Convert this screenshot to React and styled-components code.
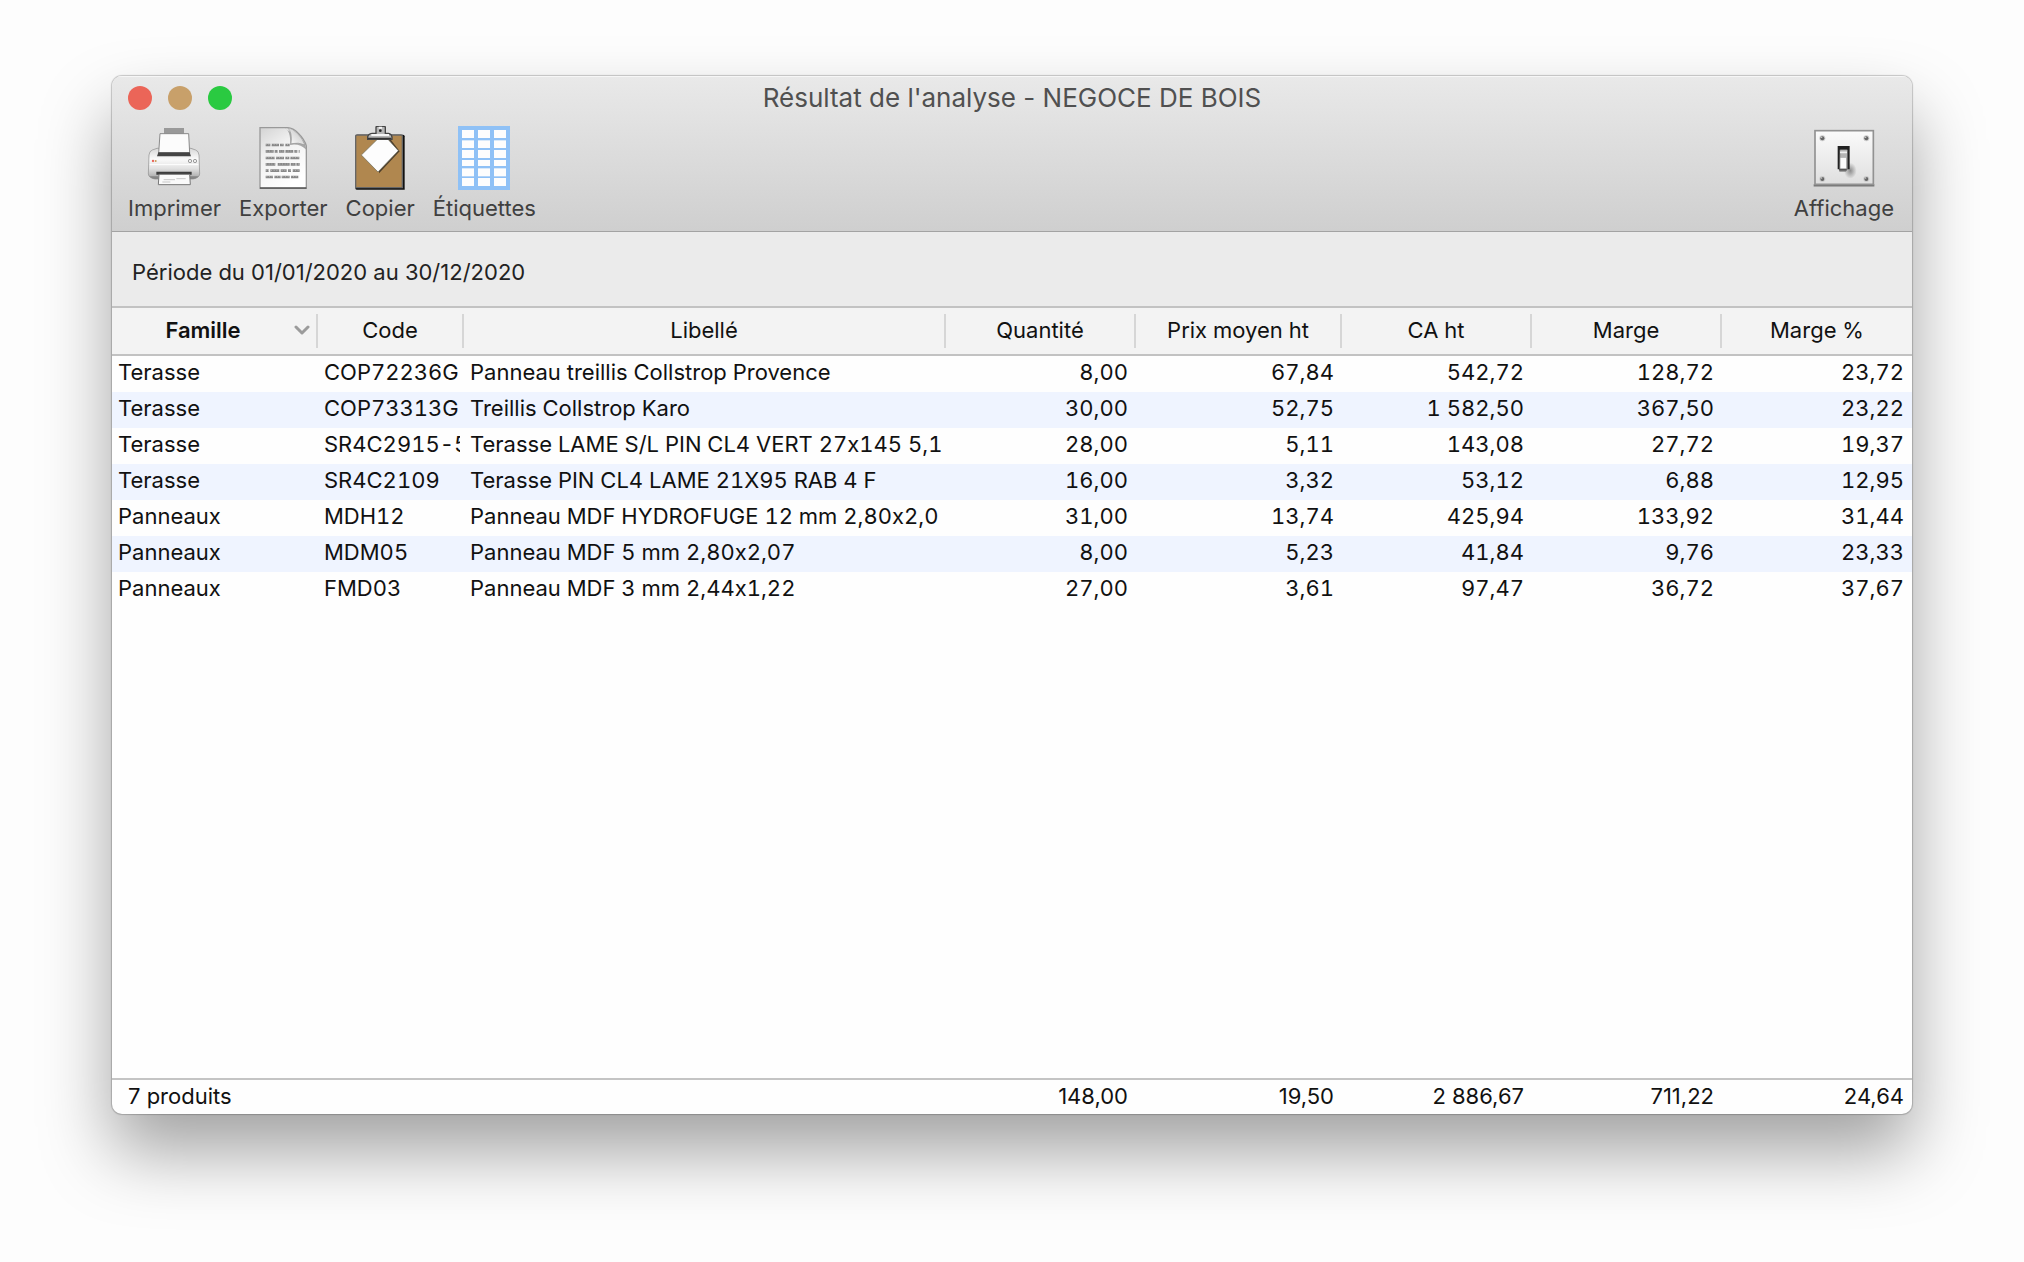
import React from 'react';
import styled, { createGlobalStyle } from 'styled-components';

const GlobalStyle = createGlobalStyle`
  * {
    box-sizing: border-box;
  }
  body {
    margin: 0;
    background: #fdfdfd;
    color: #111;
    font-family: Inter, "Liberation Sans", sans-serif;
    font-size: 22px;
    font-variant-ligatures: no-contextual;
  }
  button {
    border: 0;
    padding: 0;
    background: none;
    color: inherit;
    font: inherit;
    font-variant-ligatures: inherit;
  }
`;

const Desktop = styled.div`
  display: flex;
  min-height: 100vh;
  padding: 76px 112px 148px;
`;

const Window = styled.main`
  flex: 1;
  min-width: 0;
  display: flex;
  flex-direction: column;
  overflow: hidden;
  border-radius: 10px;
  background: #fefefe;
  box-shadow: 0 0 1px 1px rgba(0, 0, 0, 0.2), 0 38px 70px rgba(0, 0, 0, 0.36);
`;

const Header = styled.header`
  height: 156px;
  border-bottom: 1px solid #a3a3a3;
  background: linear-gradient(#e9e9e9, #cfcfcf);
  box-shadow: inset 0 1px 0 #f6f6f6;
`;

const TitleBar = styled.div`
  display: grid;
  grid-template-columns: 1fr auto 1fr;
  align-items: center;
  height: 44px;
  padding: 0 16px;
`;

const Lights = styled.div`
  display: flex;
  gap: 16px;
`;

const Light = styled.button`
  width: 24px;
  height: 24px;
  border-radius: 50%;
  background: ${(p) => p.$color};
`;

const Title = styled.h1`
  margin: 0;
  color: #505050;
  font-size: 26px;
  font-weight: 400;
  line-height: 34px;
`;

const Toolbar = styled.div`
  display: flex;
  gap: 18px;
  padding: 6px 18px 0 16px;
`;

const Spacer = styled.div`
  flex: 1;
`;

const ToolButton = styled.button`
  display: flex;
  flex-direction: column;
  align-items: center;
  gap: 4px;
  color: #404040;
  line-height: 28px;

  svg {
    display: block;
    height: 64px;
  }
`;

const Period = styled.p`
  margin: 0;
  padding: 4px 20px 0;
  border-bottom: 2px solid #c2c2c2;
  background: #ebebeb;
  color: #222;
  line-height: 72px;
  height: 76px;
`;

const Table = styled.table`
  flex: 1;
  display: flex;
  flex-direction: column;
  font-variant-numeric: tabular-nums;

  thead {
    display: block;
    border-bottom: 2px solid #c2c2c2;
    background: #f3f3f3;
  }
  tbody {
    flex: 1;
    display: block;
  }
  tfoot {
    display: block;
    border-top: 2px solid #c4c4c4;
    font-variant-numeric: normal;
  }
`;

const Row = styled.tr`
  display: grid;
  grid-template-columns: 206px 146px minmax(0, 1fr) 190px 206px 190px 190px 190px;

  tbody &:nth-child(even) {
    background: #eff4ff;
  }
`;

const FootRow = styled(Row)`
  grid-template-columns: minmax(0, 1fr) 190px 206px 190px 190px 190px;
`;

const HeadCell = styled.th`
  display: flex;
  padding: 6px 0;
  font-weight: ${(p) => (p.$sorted ? 600 : 400)};

  button {
    flex: 1;
    display: flex;
    align-items: center;
    height: 34px;
    padding: 0 ${(p) => (p.$sorted ? 6 : 0)}px 2px 0;
    border-right: 2px solid #d6d6d6;
  }
  &:last-child button {
    border-right: 0;
  }
  span {
    flex: 1;
    text-align: center;
  }
`;

const Cell = styled.td`
  padding: ${(p) => (p.$number ? '0 8px 4px' : '0 4px 4px 6px')};
  line-height: 32px;
  text-align: ${(p) => (p.$number ? 'right' : 'left')};

  div {
    overflow: hidden;
    white-space: nowrap;
  }
`;

const FootCell = styled.td`
  padding: 0 8px 2px ${(p) => (p.$number ? 8 : 16)}px;
  line-height: 32px;
  text-align: ${(p) => (p.$number ? 'right' : 'left')};
`;

const Chevron = () => (
  <svg width="16" height="10" viewBox="0 0 16 10" fill="none" stroke="#9b9b9b" strokeWidth="3" strokeLinecap="round" strokeLinejoin="round">
    <path d="M2 2l6 6 6-6" />
  </svg>
);

const PrinterIcon = () => (
  <svg width="54" height="64" viewBox="0 0 162 192">
    <defs>
      <linearGradient id="printer-body" x1="0" y1="0" x2="0" y2="1">
        <stop offset="0" stopColor="#d8d8d8" />
        <stop offset="0.35" stopColor="#fafafa" />
        <stop offset="0.65" stopColor="#e2e2e2" />
        <stop offset="1" stopColor="#a2a2a2" />
      </linearGradient>
    </defs>
    <path d="M51 6h60v18H51z" fill="#999" />
    <path d="M30 67l-14 5Q7 75 6 87L4 144q1 12 20 15h114q19-3 20-15l-2-57q-1-12-10-15l-14-5z" fill="url(#printer-body)" stroke="#8d8d8d" strokeWidth="2" />
    <path d="M39 23h86l3 58H35z" fill="#fcfcfc" stroke="#8a8a8a" strokeWidth="3" />
    <path d="M34 79h94l4 12H30z" fill="#454545" />
    <path d="M8 116h146" stroke="#fff" strokeWidth="3" />
    <circle cx="18" cy="105" r="3.5" fill="#ea6257" />
    <circle cx="26" cy="105" r="3" fill="#c99b58" />
    <circle cx="129" cy="105" r="5" fill="#eee" stroke="#777" strokeWidth="2" />
    <circle cx="144" cy="105" r="5" fill="#eee" stroke="#777" strokeWidth="2" />
    <path d="M28 137h106v9H28z" fill="#3c3c3c" />
    <path d="M5 146q4 10 19 13h10v-8H8zM157 146q-4 10-19 13h-10v-8h26z" fill="#858585" />
    <path d="M36 145h92l2 31H34z" fill="#fafafa" stroke="#777" strokeWidth="3" />
    <path d="M50 161h34M88 158h28M46 168h24" stroke="#c6c6c6" strokeWidth="3" />
  </svg>
);

const DocumentIcon = () => (
  <svg width="48" height="64" viewBox="0 0 144 192">
    <defs>
      <linearGradient id="document-page" x1="0" y1="0" x2="0.5" y2="1">
        <stop offset="0" stopColor="#d3d3d3" />
        <stop offset="0.4" stopColor="#f0f0f0" />
        <stop offset="1" stopColor="#fff" />
      </linearGradient>
      <linearGradient id="document-fold" x1="0" y1="1" x2="1" y2="0">
        <stop offset="0" stopColor="#fff" />
        <stop offset="1" stopColor="#bcbcbc" />
      </linearGradient>
    </defs>
    <path d="M3 5h82q18 1 32 16 20 20 25 39v127H3z" fill="url(#document-page)" stroke="#999" strokeWidth="4" />
    <path d="M3 186h139" stroke="#555" strokeWidth="5" />
    <path d="M76 5q20 8 17 52 28-6 49 14-1-16-9-26z" fill="#a8a8a8" />
    <path d="M86 5q15 15 10 48 22-5 42 4-7-18-22-34T86 5z" fill="url(#document-fold)" stroke="#9a9a9a" strokeWidth="2" />
    <g stroke="#888" strokeWidth="8">
      <path d="M20 57h72" strokeDasharray="14 4 22 3 11 5" />
      <path d="M20 76h102" strokeDasharray="24 3 9 4 16 3" />
      <path d="M20 96h102" strokeDasharray="27 4 24 4 12 3" />
      <path d="M20 115h102" strokeDasharray="29 7 36 3 15 2" />
      <path d="M20 134h102" strokeDasharray="9 5 27 4 18 4" />
      <path d="M20 153h102" strokeDasharray="22 4 19 3 24 4" />
    </g>
    <g stroke="#f5f5f5" strokeWidth="2" strokeDasharray="3 5" opacity="0.7">
      <path d="M20 56h72M22 75h100M20 95h102M21 114h100M20 133h102M22 152h100" />
    </g>
  </svg>
);

const ClipboardIcon = () => (
  <svg width="52" height="64" viewBox="0 0 156 192">
    <path d="M4 31q0-5 5-5h138q5 0 5 5v160H8q-4 0-4-5z" fill="#111" />
    <path d="M5 31q0-4 4-4h132q4 0 4 4v154H5z" fill="#b0874f" stroke="#666" strokeWidth="4" />
    <path d="M76 38h32l29 38-62 66z" fill="#4b3c29" />
    <path d="M70 40h32l31 34-61 64-50-51z" fill="#fdfdfd" stroke="#665" strokeWidth="2" />
    <path d="M66 4q0-3 4-3h20q4 0 4 3v18h9q10 2 11 11v7H41v-7q2-10 13-11h12z" fill="#b5b5b5" stroke="#444" strokeWidth="4" />
    <path d="M52 27h53M74 5h10" stroke="#f5f5f5" strokeWidth="6" />
    <circle cx="79" cy="14" r="4" fill="#222" />
    <path d="M42 37h70" stroke="#333" strokeWidth="4" />
  </svg>
);

const labelRows = [[12, 24], [43, 23], [72, 24], [102, 18], [127, 24], [156, 24]];

const LabelsIcon = () => (
  <svg width="52" height="64" viewBox="0 0 156 192">
    <rect width="156" height="192" fill="#8fc1f6" />
    {labelRows.map(([y, height]) =>
      [12, 60, 108].map((x) => (
        <rect key={`${x}-${y}`} x={x} y={y} width="36" height={height} fill="#fdfdfd" />
      ))
    )}
  </svg>
);

const SwitchIcon = () => (
  <svg width="62" height="64" viewBox="0 0 186 192">
    <defs>
      <linearGradient id="switch-plate" x1="0" y1="0" x2="0" y2="1">
        <stop offset="0" stopColor="#fbfbfb" />
        <stop offset="1" stopColor="#dfdfdf" />
      </linearGradient>
      <radialGradient id="switch-shadow">
        <stop offset="0" stopColor="#777" stopOpacity="0.8" />
        <stop offset="1" stopColor="#777" stopOpacity="0" />
      </radialGradient>
    </defs>
    <path d="M2 178h182" stroke="#777" strokeWidth="7" />
    <rect x="6" y="14" width="175" height="161" fill="url(#switch-plate)" stroke="#929292" strokeWidth="5" />
    {[[28, 37], [160, 37], [28, 159], [160, 159]].map(([cx, cy]) => (
      <g key={`${cx}-${cy}`}>
        <circle cx={cx} cy={cy} r="9" fill="#ccc" />
        <circle cx={cx} cy={cy} r="6" fill="#666" />
        <circle cx={cx - 2} cy={cy - 3} r="2" fill="#ddd" />
      </g>
    ))}
    <ellipse cx="112" cy="134" rx="19" ry="24" fill="url(#switch-shadow)" />
    <path d="M74 60h36v70H74z" fill="#222" />
    <path d="M80 71h24v56l-5 10H79z" fill="#888" />
    <path d="M82 71h20v24H82z" fill="#b5b5b5" />
    <path d="M82 95h18v33H82z" fill="#fbfbfb" />
    <path d="M81 79h21" stroke="#f0f0f0" strokeWidth="5" />
    <path d="M78 131h23" stroke="#555" strokeWidth="5" />
  </svg>
);

const columns = ['Famille', 'Code', 'Libellé', 'Quantité', 'Prix moyen ht', 'CA ht', 'Marge', 'Marge %'];

const products = [
  ['Terasse', 'COP72236G', 'Panneau treillis Collstrop Provence', '8,00', '67,84', '542,72', '128,72', '23,72'],
  ['Terasse', 'COP73313G', 'Treillis Collstrop Karo', '30,00', '52,75', '1 582,50', '367,50', '23,22'],
  ['Terasse', 'SR4C2915-5', 'Terasse LAME S/L PIN CL4 VERT 27x145 5,1', '28,00', '5,11', '143,08', '27,72', '19,37'],
  ['Terasse', 'SR4C2109', 'Terasse PIN CL4 LAME 21X95 RAB 4 F', '16,00', '3,32', '53,12', '6,88', '12,95'],
  ['Panneaux', 'MDH12', 'Panneau MDF HYDROFUGE 12 mm 2,80x2,0', '31,00', '13,74', '425,94', '133,92', '31,44'],
  ['Panneaux', 'MDM05', 'Panneau MDF 5 mm 2,80x2,07', '8,00', '5,23', '41,84', '9,76', '23,33'],
  ['Panneaux', 'FMD03', 'Panneau MDF 3 mm 2,44x1,22', '27,00', '3,61', '97,47', '36,72', '37,67'],
];

const totals = ['148,00', '19,50', '2 886,67', '711,22', '24,64'];

export default function App() {
  return (
    <>
      <GlobalStyle />
      <Desktop>
        <Window>
          <Header>
            <TitleBar>
              <Lights>
                <Light $color="#eb6558" aria-label="Fermer" />
                <Light $color="#c8a06a" aria-label="Réduire" />
                <Light $color="#2aca41" aria-label="Agrandir" />
              </Lights>
              <Title>Résultat de l'analyse - NEGOCE DE BOIS</Title>
            </TitleBar>
            <Toolbar>
              <ToolButton><PrinterIcon />Imprimer</ToolButton>
              <ToolButton><DocumentIcon />Exporter</ToolButton>
              <ToolButton><ClipboardIcon />Copier</ToolButton>
              <ToolButton><LabelsIcon />Étiquettes</ToolButton>
              <Spacer />
              <ToolButton><SwitchIcon />Affichage</ToolButton>
            </Toolbar>
          </Header>
          <Period>Période du 01/01/2020 au 30/12/2020</Period>
          <Table>
            <thead>
              <Row>
                {columns.map((name, i) => (
                  <HeadCell key={name} scope="col" $sorted={i === 0}>
                    <button>
                      <span>{name}</span>
                      {i === 0 && <Chevron />}
                    </button>
                  </HeadCell>
                ))}
              </Row>
            </thead>
            <tbody>
              {products.map((product) => (
                <Row key={product[1]}>
                  {product.map((value, i) => (
                    <Cell key={columns[i]} $number={i > 2}>
                      <div>{value}</div>
                    </Cell>
                  ))}
                </Row>
              ))}
            </tbody>
            <tfoot>
              <FootRow>
                <FootCell>7 produits</FootCell>
                {totals.map((total) => (
                  <FootCell key={total} $number>{total}</FootCell>
                ))}
              </FootRow>
            </tfoot>
          </Table>
        </Window>
      </Desktop>
    </>
  );
}
